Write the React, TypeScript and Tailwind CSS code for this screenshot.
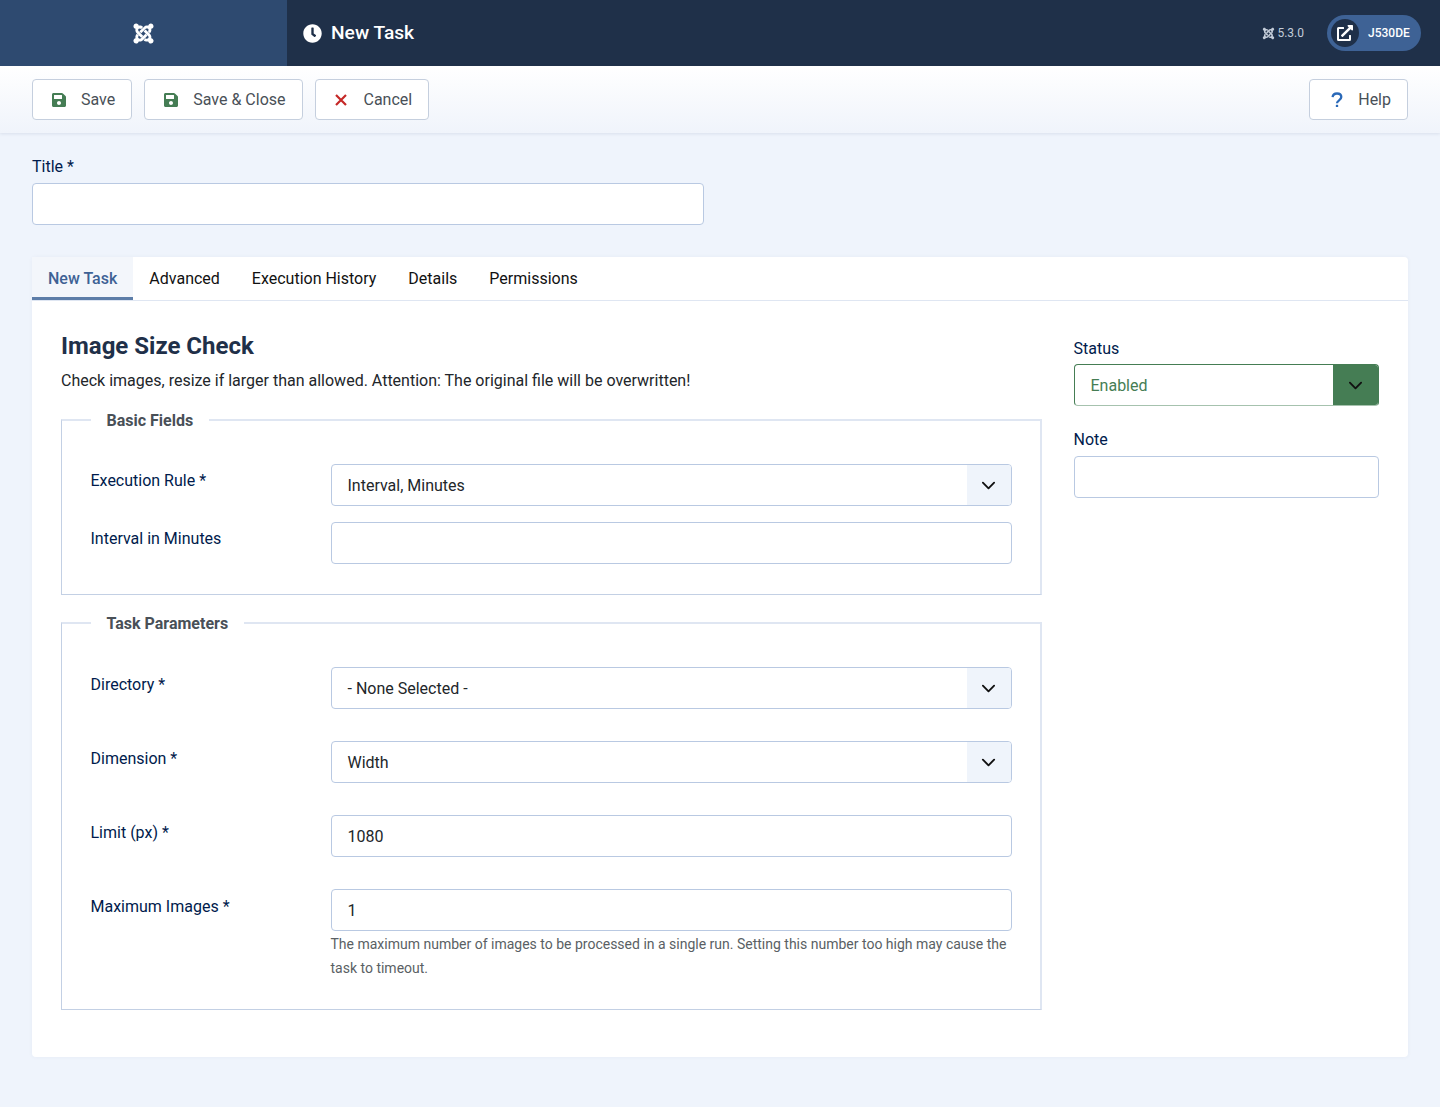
import { FaClock, FaExternalLinkAlt, FaJoomla, FaSave } from "react-icons/fa";
import type { ReactNode } from "react";

function Chevron({ className }: { className?: string }) {
  return (
    <svg viewBox="0 0 16 16" className={className} fill="none" stroke="currentColor" strokeWidth="2" strokeLinecap="round" strokeLinejoin="round">
      <path d="M2 5l6 6 6-6" />
    </svg>
  );
}

function CancelIcon() {
  return (
    <svg viewBox="0 0 16 16" className="h-4 w-4 text-[#c52827]" fill="none" stroke="currentColor" strokeWidth="2.2">
      <path d="M1 3l10 10M11 3L1 13" />
    </svg>
  );
}

function HelpIcon() {
  return (
    <svg viewBox="0 0 16 16" className="h-4 w-4 text-[#2a69b8]" fill="none" stroke="currentColor" strokeWidth="2.3">
      <path d="M3.6 5.2C3.8 2.8 5.6 1.5 8 1.5c2.5 0 4.3 1.4 4.3 3.6 0 3.2-4.3 3.2-4.3 6.2" />
      <path d="M8 12.8v2.2" />
    </svg>
  );
}

function ToolbarButton({ icon, label }: { icon: ReactNode; label: string }) {
  return (
    <button type="button" className="flex h-[41px] items-center rounded border border-[#c5cfde] bg-white pl-[19px] pr-4 text-base text-[#495057]">
      <span className="flex w-[16px] justify-start">{icon}</span>
      <span className="ml-[13px]">{label}</span>
    </button>
  );
}

function TextInput({ value = "" }: { value?: string }) {
  return (
    <div className="flex h-[42px] w-full items-center rounded border border-[#b9c9e2] bg-white px-4 pt-[2px] text-base text-[#22262a]">
      {value}
    </div>
  );
}

function Select({ value }: { value: string }) {
  return (
    <div className="flex h-[42px] w-full items-center overflow-hidden rounded border border-[#b9c9e2] bg-white text-base text-[#22262a]">
      <span className="flex-1 px-4 pt-[2px]">{value}</span>
      <span className="flex h-full w-[44px] items-center justify-center bg-[#eff4fb] text-[#111]">
        <Chevron className="h-[15px] w-[15px]" />
      </span>
    </div>
  );
}

function Field({ label, low, className, children }: { label: string; low?: boolean; className?: string; children: ReactNode }) {
  return (
    <div className={`flex ${className ?? ""}`}>
      <label className={`w-[240px] shrink-0 text-base leading-6 text-[#001b4c] ${low ? "pt-[6px]" : "pt-[5px]"}`}>{label}</label>
      <div className="w-[681px]">{children}</div>
    </div>
  );
}

function Group({ legend, className, children }: { legend: string; className?: string; children: ReactNode }) {
  return (
    <fieldset className={`border border-t-2 border-r-2 border-[#dfe6f2] border-l-[#c3d0e4] border-b-[#c3d0e4] pl-[28.5px] ${className ?? ""}`}>
      <legend className="h-6 px-4 pt-[1px] text-base font-bold leading-6 text-[#495057]">{legend}</legend>
      {children}
    </fieldset>
  );
}

export default function App() {
  const tabs = ["Advanced", "Execution History", "Details", "Permissions"];

  return (
    <div className="min-h-[1107px] bg-[#eff4fc] font-['Roboto',sans-serif]">
      <header className="flex h-[66px] items-center bg-[#1f3049] text-white">
        <div className="flex h-full w-[287px] items-center justify-center bg-[#2e4a70]">
          <FaJoomla className="h-[23px] w-[23px]" />
        </div>
        <FaClock className="ml-[16px] h-[19px] w-[19px]" />
        <h1 className="ml-[9px] text-[19.2px] font-medium">New Task</h1>
        <div className="ml-auto flex items-center gap-[2px] text-xs text-[#c3ccd9]">
          <FaJoomla className="h-[13px] w-[13px]" />
          5.3.0
        </div>
        <div className="ml-[23px] mr-[19px] flex h-[36px] w-[94px] items-center rounded-full bg-[#3e6295] pl-[4px]">
          <span className="flex h-[28px] w-[28px] items-center justify-center rounded-full bg-[#1f3049]">
            <FaExternalLinkAlt className="h-[16px] w-[16px]" />
          </span>
          <span className="ml-[9px] text-xs font-medium">J530DE</span>
        </div>
      </header>

      <div className="flex h-[67px] items-center gap-3 bg-gradient-to-b from-white to-[#f0f4fb] px-8 shadow-[0_1px_3px_rgba(60,80,120,0.12)]">
        <ToolbarButton icon={<FaSave className="-ml-px h-[16px] w-[16px] text-[#457d54]" />} label="Save" />
        <ToolbarButton icon={<FaSave className="-ml-px h-[16px] w-[16px] text-[#457d54]" />} label="Save & Close" />
        <ToolbarButton icon={<CancelIcon />} label="Cancel" />
        <div className="ml-auto">
          <ToolbarButton icon={<HelpIcon />} label="Help" />
        </div>
      </div>

      <main className="px-8 pt-[22px]">
        <label className="block text-base leading-6 text-[#001b4c]">Title *</label>
        <div className="mt-[4px] w-[672px]">
          <TextInput />
        </div>

        <section className="mt-8 h-[800px] rounded bg-white shadow-[0_0_4px_rgba(60,80,120,0.05)]">
          <nav className="flex h-[44px] border-b border-[#dfe6f2] text-base text-[#111]">
            <div className="flex h-[43px] items-center border-b-[3px] border-[#5d7da8] bg-[#f3f6fb] px-4 pt-[3px] font-medium text-[#3e6295]">
              New Task
            </div>
            {tabs.map((tab) => (
              <div key={tab} className="flex h-[43px] items-center px-4">
                {tab}
              </div>
            ))}
          </nav>

          <div className="flex gap-[31.5px] px-[29px] pt-[27px]">
            <div className="w-[981px]">
              <h2 className="text-2xl font-bold leading-[36px] text-[#1f3049]">Image Size Check</h2>
              <p className="mt-[5px] text-base leading-6 text-[#22262a]">
                Check images, resize if larger than allowed. Attention: The original file will be overwritten!
              </p>

              <Group legend="Basic Fields" className="mt-[15px] h-[187px] pt-[32px]">
                <Field label="Execution Rule *">
                  <Select value="Interval, Minutes" />
                </Field>
                <Field label="Interval in Minutes" className="mt-4">
                  <TextInput />
                </Field>
              </Group>

              <Group legend="Task Parameters" className="mt-[16px] h-[399px] pt-[32px]">
                <Field label="Directory *" low>
                  <Select value="- None Selected -" />
                </Field>
                <Field label="Dimension *" low className="mt-8">
                  <Select value="Width" />
                </Field>
                <Field label="Limit (px) *" low className="mt-8">
                  <TextInput value="1080" />
                </Field>
                <Field label="Maximum Images *" low className="mt-8">
                  <TextInput value="1" />
                  <p className="pt-[1px] text-sm leading-6 text-[#5a5f64]">
                    The maximum number of images to be processed in a single run. Setting this number too high may cause the task to timeout.
                  </p>
                </Field>
              </Group>
            </div>

            <aside className="w-[305.5px] pt-[9px]">
              <label className="block text-base leading-6 text-[#001b4c]">Status</label>
              <div className="mt-[3px] flex h-[42px] items-center overflow-hidden rounded border border-[#457d54] border-b-[#a6c2ae] bg-white text-base text-[#457d54]">
                <span className="flex-1 px-4 pt-[2px]">Enabled</span>
                <span className="flex h-full w-[45px] items-center justify-center bg-[#457d54] text-[#111]">
                  <Chevron className="h-[15px] w-[15px]" />
                </span>
              </div>
              <label className="mt-[22px] block text-base leading-6 text-[#001b4c]">Note</label>
              <div className="mt-[4px]">
                <TextInput />
              </div>
            </aside>
          </div>
        </section>
      </main>
    </div>
  );
}
